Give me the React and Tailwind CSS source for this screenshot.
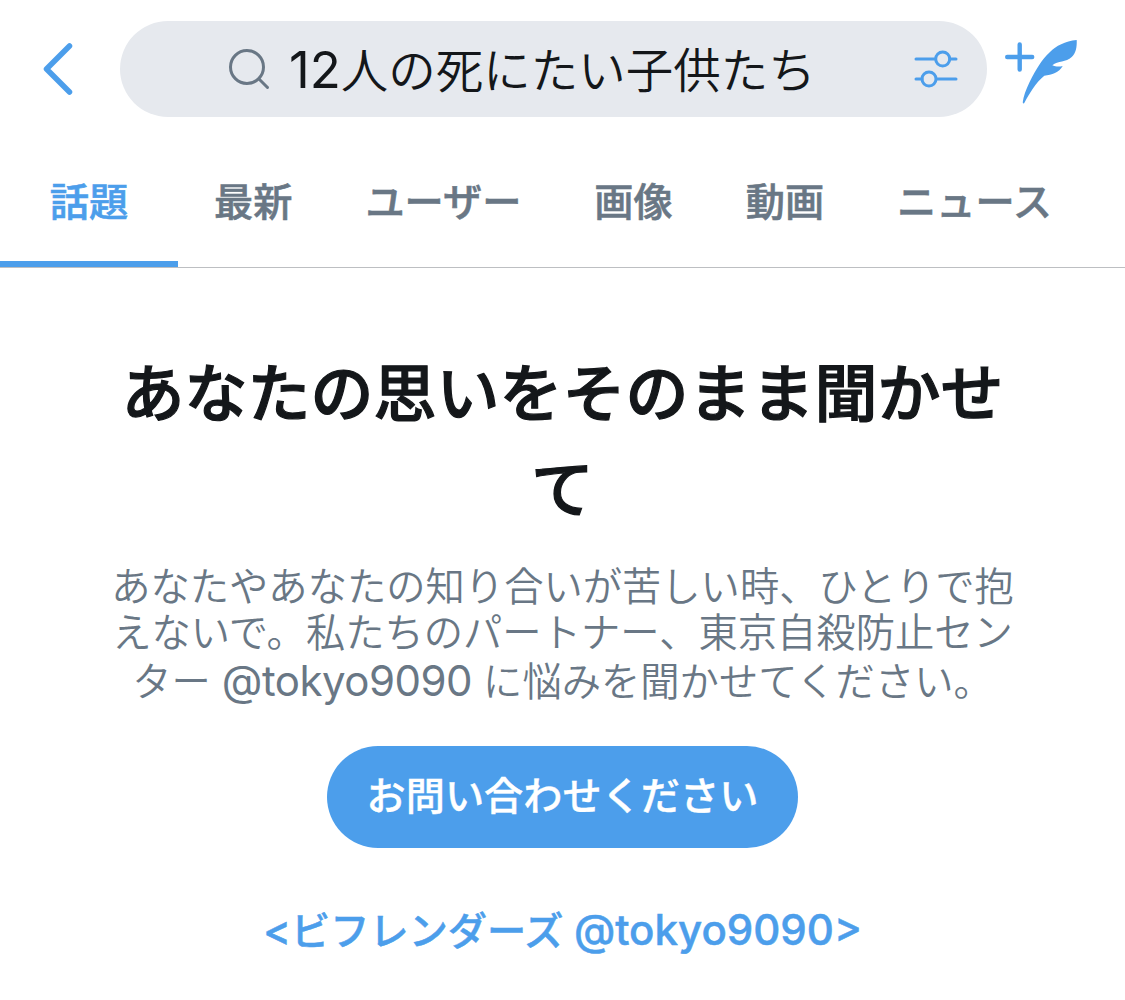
import React from 'react';

const tabs = ['最新', 'ユーザー', '画像', '動画', 'ニュース'];

function App() {
  return (
    <div className="flex h-[1000px] w-[1125px] flex-col overflow-hidden bg-white font-['Inter','Noto_Sans_CJK_JP',sans-serif] text-[#14171a]">
      {/* Search header */}
      <header className="flex h-[138px] items-center">
        <button className="ml-[42px] w-[78px]">
          <svg width="32" height="54" viewBox="0 0 32 54" fill="none" stroke="#4c9eeb" strokeWidth="5.5" strokeLinecap="round" strokeLinejoin="round">
            <path d="M27.500 4 L4.500 27 L27.500 50" />
          </svg>
        </button>
        <div className="flex h-24 w-[867px] items-center rounded-full bg-[#e6e9ee]">
          <svg className="ml-[108px]" width="42" height="42" viewBox="0 0 42 42" fill="none" stroke="#697785" strokeWidth="3" strokeLinecap="round">
            <circle cx="19" cy="19" r="16.500" />
            <path d="M31 31 L39.500 39.500" />
          </svg>
          <span className="ml-[19px] pt-[3px] text-[47.5px] leading-[60px] font-[350] whitespace-nowrap">
            <span className="text-[51px] font-normal">12</span>人の死にたい子供たち
          </span>
          <svg className="mr-7 ml-auto" width="46" height="38" viewBox="0 0 46 38" fill="none" stroke="#4c9eeb" strokeWidth="3" strokeLinecap="round">
            <path d="M3 9 H22 M37 9 H43 M3 29 H9 M24 29 H43" />
            <circle cx="29.700" cy="9" r="7" />
            <circle cx="16" cy="29" r="7" />
          </svg>
        </div>
        <svg className="ml-[18px]" width="74" height="70" viewBox="0 0 74 70" fill="#4c9eeb">
          <path d="M14.700 10.500 V35.500 M2.200 23 H27.200" stroke="#4c9eeb" strokeWidth="4.400" strokeLinecap="round" />
          <path d="M71.700 6 C60 7 51 12 45 18 C40 22.500 37.500 26 35 29.700 C28.500 39.500 19 57 17.800 68 C17.700 69.800 18.800 70 19.700 68.300 C23.500 61 31 48 39.300 41.700 C47 41 54 38.500 57.700 32 C54 33 50 32.500 47.300 31.200 C53 26.500 61 28.500 66.700 23 C71 19 72 13 71.700 6 Z" />
        </svg>
      </header>

      {/* Tabs */}
      <nav className="flex h-[130px] gap-[73px] border-b border-[#bdbfc2] text-[39.2px] leading-[127px] font-medium whitespace-nowrap text-[#697785] [-webkit-text-stroke:0.6px]">
        <span className="-mr-[37px] w-[178px] border-b-[6px] border-[#4c9eeb] text-center text-[#4c9eeb]">話題</span>
        {tabs.map((tab) => (
          <span key={tab}>{tab}</span>
        ))}
      </nav>

      {/* Message */}
      <main className="flex flex-col items-center text-center">
        <h1 className="mt-[77px] text-[63px] leading-[96px] font-medium whitespace-nowrap [-webkit-text-stroke:1.2px]">
          あなたの思いをそのまま聞かせ<br />て
        </h1>
        <p className="mt-[27px] text-[39.3px] leading-[46px] font-[350] whitespace-nowrap text-[#697785]">
          <span className="block">あなたやあなたの知り合いが苦しい時、ひとりで抱</span>
          <span className="block">えないで。私たちのパートナー、東京自殺防止セン</span>
          <span className="block leading-[50px]">
            ター <span className="text-[42px] font-normal tracking-[-0.5px]">@tokyo9090</span> に悩みを聞かせてください。
          </span>
        </p>
        <button className="mt-[39px] h-[102px] w-[471px] rounded-full bg-[#4c9eeb] pb-0.5 text-[39.2px] font-medium text-white [-webkit-text-stroke:0.4px]">
          お問い合わせください
        </button>
        <a className="mt-[52px] text-[39.2px] leading-[60px] font-medium whitespace-nowrap text-[#4c9eeb] [-webkit-text-stroke:0.5px]">
          <span className="text-[42px]">&lt;</span>ビフレンダーズ <span className="text-[42px]">@tokyo9090&gt;</span>
        </a>
      </main>
    </div>
  );
}

export default App;
